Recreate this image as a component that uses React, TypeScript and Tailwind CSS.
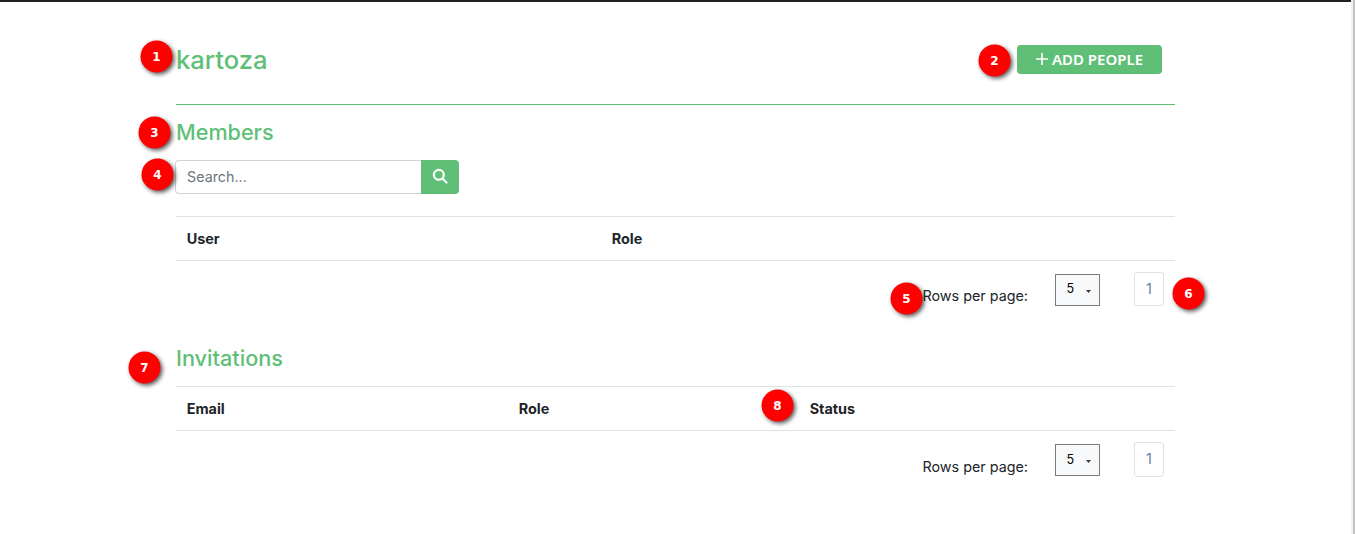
import React from "react";
import { FaMagnifyingGlass } from "react-icons/fa6";

type Marker = { label: string; place: string };

const markers: Marker[] = [
  { label: "1", place: "left-[140px] top-[40px]" },
  { label: "2", place: "left-[978px] top-[44px]" },
  { label: "3", place: "left-[138px] top-[116px]" },
  { label: "4", place: "left-[141px] top-[158px]" },
  { label: "5", place: "left-[890px] top-[282px]" },
  { label: "6", place: "left-[1172px] top-[277px]" },
  { label: "7", place: "left-[128px] top-[351px]" },
  { label: "8", place: "left-[761px] top-[389px]" },
];

function Pagination({ labelPad, pageHeight, valuePad }: { labelPad: string; pageHeight: string; valuePad: string }) {
  return (
    <div className="flex items-start justify-end pr-[11px] pt-[11px]">
      <span className={`mr-[27px] text-[14.35px] leading-[22px] ${labelPad}`}>Rows per page:</span>
      <button className="mr-[34px] mt-[2px] flex h-8 w-[45px] items-center border border-[#7b7b7b] bg-[#f8f9fa] pl-[10.5px] text-[12.5px] leading-none text-black">
        <span className={`w-[19.5px] text-left ${valuePad}`}>5</span>
        <svg className="mt-[2px] h-[3px] w-[5px]" viewBox="0 0 5 3">
          <path d="M0 0h5L2.5 3z" fill="#343a40" />
        </svg>
      </button>
      <button
        className={`flex w-[30px] items-center justify-center rounded-[3px] border border-[#dee2e6] text-[14.4px] leading-none text-[#6c8195] ${pageHeight}`}
      >
        1
      </button>
    </div>
  );
}

export default function App() {
  return (
    <div className="relative flex h-[534px] w-[1355px] overflow-hidden bg-white font-['Inter',sans-serif] text-[#212529]">
      <div className="w-[1351px] border-t-2 border-[#231f20] pl-[176px]">
        <main className="w-[999px]">
          <header className="flex h-[103px] items-start justify-between border-b border-[#5fbf77] pr-[13px] pt-[43px]">
            <h1 className="-mt-[2px] text-[25.6px] font-medium leading-[34px] text-[#5fbf77]">kartoza</h1>
            <button className="flex h-[29px] w-[145px] items-center justify-center gap-1 rounded-[4px] bg-[#5fbf77] font-['Noto_Sans',sans-serif] text-[15px] font-semibold leading-none text-white">
              <svg className="-mt-px h-3 w-3" viewBox="0 0 12 12">
                <path d="M6 0.3v11.4M0.3 6h11.4" stroke="white" strokeWidth="1.6" strokeLinecap="round" />
              </svg>
              ADD PEOPLE
            </button>
          </header>

          <section className="h-[231px] pt-[13px]">
            <h2 className="text-[21.6px] font-medium leading-[28px] text-[#5fbf77]">Members</h2>
            <div className="-ml-px mt-[14px] flex h-[34px] w-[284px]">
              <input
                className="w-[246px] rounded-l-[4px] border border-r-0 border-[#ced4da] bg-white px-[11px] text-[14.3px] outline-none placeholder:text-[#6c757d]"
                placeholder="Search..."
              />
              <button className="flex w-[38px] items-center justify-center rounded-r-[4px] bg-[#5fbf77] text-white">
                <FaMagnifyingGlass className="-mt-px h-[14.4px] w-[14.4px] overflow-visible stroke-white stroke-[14px]" />
              </button>
            </div>
            <div className="mt-[22px] flex h-[45px] items-center border-y border-[#dee2e6] pl-[10.7px] text-[14.4px] font-bold">
              <span className="w-[425px]">User</span>
              <span>Role</span>
            </div>
            <Pagination labelPad="mt-[13px]" pageHeight="h-[34px]" valuePad="-mt-px" />
          </section>

          <section className="pt-[8px]">
            <h2 className="text-[21.7px] font-medium leading-[28px] text-[#5fbf77]">Invitations</h2>
            <div className="mt-[14px] flex h-[45px] items-center border-y border-[#dee2e6] pl-[10.7px] text-[14.4px] font-bold">
              <span className="w-[332px]">Email</span>
              <span className="w-[291px]">Role</span>
              <span>Status</span>
            </div>
            <Pagination labelPad="mt-[14px]" pageHeight="h-[35px] pb-px" valuePad="mt-px" />
          </section>
        </main>
      </div>
      <div className="w-[2px] bg-[#f0f0f0]" />
      <div className="w-[2px] bg-[#c1c1c1]" />

      {markers.map((m) => (
        <span
          key={m.label}
          className={`absolute flex h-8 w-8 translate-x-[0.5px] translate-y-[0.5px] items-center justify-center rounded-full bg-[#ff0000] font-['DejaVu_Sans',sans-serif] text-[12px] font-bold leading-none text-white shadow-[2px_2px_4px_rgba(0,0,0,0.65)] ${m.place}`}
        >
          {m.label}
        </span>
      ))}
    </div>
  );
}
